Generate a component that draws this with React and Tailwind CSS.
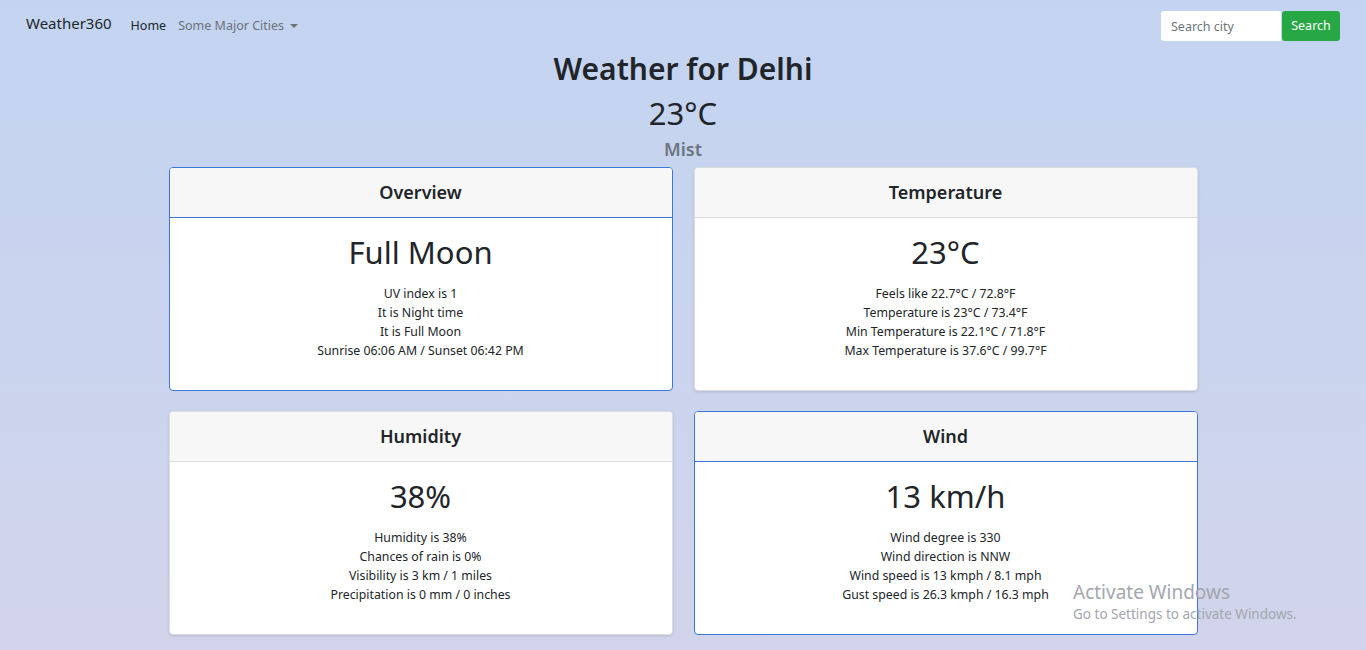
import React from 'react';

const cards = [
  {
    title: 'Overview',
    value: 'Full Moon',
    active: true,
    lines: ['UV index is 1', 'It is Night time', 'It is Full Moon', 'Sunrise 06:06 AM / Sunset 06:42 PM'],
  },
  {
    title: 'Temperature',
    value: '23°C',
    lines: [
      'Feels like 22.7°C / 72.8°F',
      'Temperature is 23°C / 73.4°F',
      'Min Temperature is 22.1°C / 71.8°F',
      'Max Temperature is 37.6°C / 99.7°F',
    ],
  },
  {
    title: 'Humidity',
    value: '38%',
    lines: ['Humidity is 38%', 'Chances of rain is 0%', 'Visibility is 3 km / 1 miles', 'Precipitation is 0 mm / 0 inches'],
  },
  {
    title: 'Wind',
    value: '13 km/h',
    active: true,
    lines: ['Wind degree is 330', 'Wind direction is NNW', 'Wind speed is 13 kmph / 8.1 mph', 'Gust speed is 26.3 kmph / 16.3 mph'],
  },
];

function Card({ card }) {
  return (
    <div
      className={[
        'h-[224px] overflow-hidden rounded-[4px] border bg-white',
        card.active
          ? 'border-[#3b78d8]'
          : 'border-[#dcdde3] shadow-[0_1px_3px_rgba(0,0,0,0.12)]',
      ].join(' ')}
    >
      <div
        className={[
          'flex h-[50px] items-center justify-center border-b bg-[#f7f7f7] text-[18px] font-semibold text-[#212529]',
          card.active ? 'border-[#3b78d8]' : 'border-[#dcdcdc]',
        ].join(' ')}
      >
        {card.title}
      </div>
      <div className="flex flex-col items-center pt-[13px] text-[#212529]">
        <div className="text-[31px] leading-[42px]">{card.value}</div>
        <div className="mt-[11px] flex flex-col items-center text-[12.3px] leading-[19px]">
          {card.lines.map((line) => (
            <p key={line}>{line}</p>
          ))}
        </div>
      </div>
    </div>
  );
}

export default function App() {
  return (
    <div
      className="relative min-h-[650px] bg-gradient-to-b from-[#c3d4f1] to-[#d1d4eb] text-[#212529]"
      style={{ fontFamily: '"Noto Sans", "Open Sans", sans-serif' }}
    >
      <nav className="flex h-[52px] items-center px-[26px]">
        <a className="mr-[19px] mb-[5px] text-[15px] text-[#212529]">Weather360</a>
        <a className="mr-[12px] text-[12.5px] text-[#212529]">Home</a>
        <a className="flex items-center text-[12.5px] text-[#6d7177]">
          Some Major Cities
          <span className="ml-[6px] inline-block h-0 w-0 border-x-[4px] border-t-[4px] border-x-transparent border-t-[#6d7177]" />
        </a>
        <div className="ml-auto flex items-center">
          <input
            placeholder="Search city"
            className="h-[30px] w-[120px] rounded-l-[3px] bg-white px-[10px] text-[12.5px] text-[#495057] placeholder-[#6c757d] outline-none"
          />
          <button className="ml-[1px] h-[30px] w-[58px] rounded-[3px] bg-[#28a745] text-[12.5px] text-white">
            Search
          </button>
        </div>
      </nav>

      <div className="flex flex-col items-center">
        <h1 className="mt-[-2px] text-[30px] font-semibold leading-[38px]">Weather for Delhi</h1>
        <div className="mt-[6px] text-[31px] leading-[38px]">23°C</div>
        <div className="mt-[5px] text-[18px] font-semibold leading-[24px] text-[#6c757d]">Mist</div>
      </div>

      <div className="mx-auto mt-[6px] grid w-[1029px] grid-cols-2 gap-x-[21px] gap-y-[20px]">
        {cards.map((card) => (
          <Card key={card.title} card={card} />
        ))}
      </div>

      <div className="pointer-events-none absolute left-[1073px] top-[580px] text-[#a3a6ae]">
        <div className="text-[19px] leading-[24px]">Activate Windows</div>
        <div className="text-[13.5px] leading-[20px]">Go to Settings to activate Windows.</div>
      </div>
    </div>
  );
}
